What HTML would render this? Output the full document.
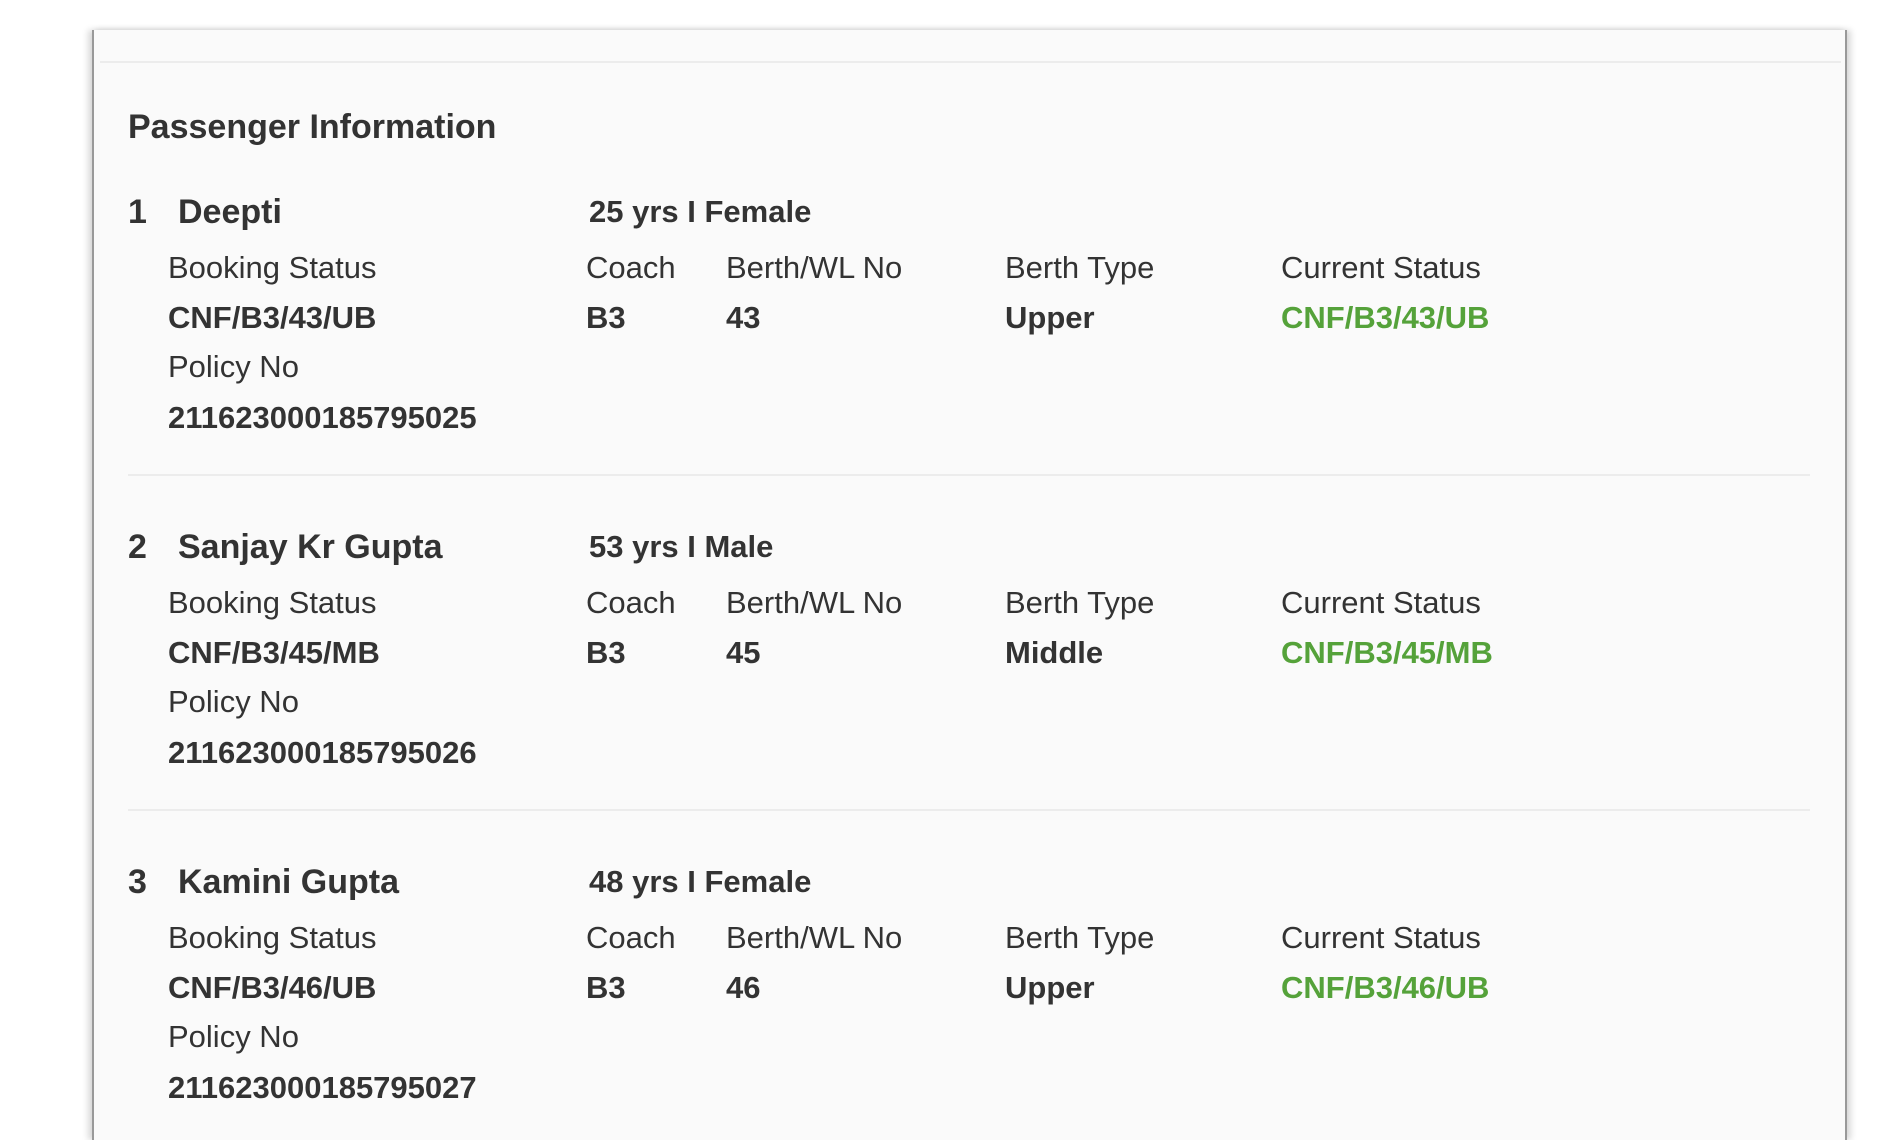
<!DOCTYPE html>
<html><head><meta charset="utf-8"><style>
html,body{margin:0;padding:0;width:1894px;height:1134px;overflow:hidden;background:#fff;font-family:"Liberation Sans",Arial,sans-serif;color:#333;}
.panel{position:absolute;left:92px;top:30px;width:1751px;height:1110px;background:#fafafa;border-left:2px solid #999;border-right:2px solid #999;box-shadow:-4px 0 6px rgba(0,0,0,.15),4px 0 6px rgba(0,0,0,.15);}
.sep{position:absolute;height:2px;background:#ececec;}
.t{position:absolute;line-height:40px;height:40px;white-space:nowrap;}
.h{font-size:34px;font-weight:bold;}
.n{font-size:34px;font-weight:bold;}
.a{font-size:31px;font-weight:bold;}
.l{font-size:31px;}
.v{font-size:31px;font-weight:bold;}
.g{color:#55a23a;}
</style></head><body>
<div class="panel"></div>
<div class="sep" style="left:100px;top:61px;width:1741px;"></div>
<div class="t h" style="left:128px;top:107px;">Passenger Information</div>

<div class="t n" style="left:128px;top:192px;">1</div>
<div class="t n" style="left:178px;top:192px;">Deepti</div>
<div class="t a" style="left:589px;top:192px;">25 yrs I Female</div>
<div class="t l" style="left:168px;top:248px;">Booking Status</div>
<div class="t l" style="left:586px;top:248px;">Coach</div>
<div class="t l" style="left:726px;top:248px;">Berth/WL No</div>
<div class="t l" style="left:1005px;top:248px;">Berth Type</div>
<div class="t l" style="left:1281px;top:248px;">Current Status</div>
<div class="t v" style="left:168px;top:298px;">CNF/B3/43/UB</div>
<div class="t v" style="left:586px;top:298px;">B3</div>
<div class="t v" style="left:726px;top:298px;">43</div>
<div class="t v" style="left:1005px;top:298px;">Upper</div>
<div class="t v g" style="left:1281px;top:298px;">CNF/B3/43/UB</div>
<div class="t l" style="left:168px;top:347px;">Policy No</div>
<div class="t v" style="left:168px;top:398px;">211623000185795025</div>
<div class="sep" style="left:128px;top:474px;width:1682px;"></div>

<div class="t n" style="left:128px;top:527px;">2</div>
<div class="t n" style="left:178px;top:527px;">Sanjay Kr Gupta</div>
<div class="t a" style="left:589px;top:527px;">53 yrs I Male</div>
<div class="t l" style="left:168px;top:583px;">Booking Status</div>
<div class="t l" style="left:586px;top:583px;">Coach</div>
<div class="t l" style="left:726px;top:583px;">Berth/WL No</div>
<div class="t l" style="left:1005px;top:583px;">Berth Type</div>
<div class="t l" style="left:1281px;top:583px;">Current Status</div>
<div class="t v" style="left:168px;top:633px;">CNF/B3/45/MB</div>
<div class="t v" style="left:586px;top:633px;">B3</div>
<div class="t v" style="left:726px;top:633px;">45</div>
<div class="t v" style="left:1005px;top:633px;">Middle</div>
<div class="t v g" style="left:1281px;top:633px;">CNF/B3/45/MB</div>
<div class="t l" style="left:168px;top:682px;">Policy No</div>
<div class="t v" style="left:168px;top:733px;">211623000185795026</div>
<div class="sep" style="left:128px;top:809px;width:1682px;"></div>

<div class="t n" style="left:128px;top:862px;">3</div>
<div class="t n" style="left:178px;top:862px;">Kamini Gupta</div>
<div class="t a" style="left:589px;top:862px;">48 yrs I Female</div>
<div class="t l" style="left:168px;top:918px;">Booking Status</div>
<div class="t l" style="left:586px;top:918px;">Coach</div>
<div class="t l" style="left:726px;top:918px;">Berth/WL No</div>
<div class="t l" style="left:1005px;top:918px;">Berth Type</div>
<div class="t l" style="left:1281px;top:918px;">Current Status</div>
<div class="t v" style="left:168px;top:968px;">CNF/B3/46/UB</div>
<div class="t v" style="left:586px;top:968px;">B3</div>
<div class="t v" style="left:726px;top:968px;">46</div>
<div class="t v" style="left:1005px;top:968px;">Upper</div>
<div class="t v g" style="left:1281px;top:968px;">CNF/B3/46/UB</div>
<div class="t l" style="left:168px;top:1017px;">Policy No</div>
<div class="t v" style="left:168px;top:1068px;">211623000185795027</div>
</body></html>
